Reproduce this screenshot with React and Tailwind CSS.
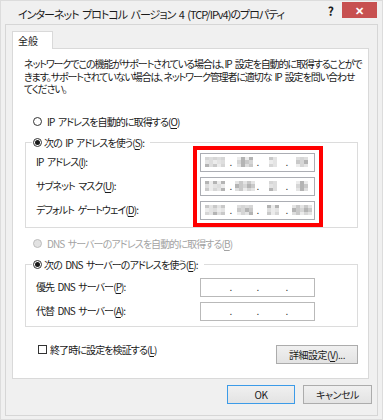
import React from "react";

const shades = [
  "bg-[#e4e4e4]",
  "bg-[#d6d6d6]",
  "bg-[#ececec]",
  "bg-[#c9c9c9]",
  "bg-[#dedede]",
  "bg-[#b4b4b4]",
];

// blurred-out address blocks: [columns, seed]
const masked = [
  [[5, 1], [4, 2], [2, 3], [3, 4]],
  [[5, 5], [5, 6], [2, 7], [3, 8]],
  [[5, 9], [4, 10], [3, 11], [5, 12]],
];

function Mosaic({ cols, seed }) {
  const rows = [0, 1, 2];
  return (
    <div className="flex flex-col">
      {rows.map((r) => (
        <div key={r} className="flex">
          {Array.from({ length: cols }).map((_, c) => (
            <span
              key={c}
              className={"block w-[4px] h-[3.5px] " + shades[(seed * 7 + r * 5 + c * 3 + r * c) % shades.length]}
            />
          ))}
        </div>
      ))}
    </div>
  );
}

function Dot() {
  return <span className="w-[4px] flex justify-center text-[#333] text-[10px] leading-none">.</span>;
}

function IpField({ blocks, border = "border-[#abadb3]" }) {
  const widths = ["w-[28px]", "w-[23px]", "w-[25px]", "w-[25px]"];
  return (
    <div className={"w-[115px] h-[19px] border bg-white flex items-center " + border}>
      {widths.map((w, i) => (
        <React.Fragment key={i}>
          <span className={"h-full flex items-center justify-center " + w}>
            {blocks && <Mosaic cols={blocks[i][0]} seed={blocks[i][1]} />}
          </span>
          {i < 3 && <Dot />}
        </React.Fragment>
      ))}
    </div>
  );
}

function K({ c }) {
  return <span className="underline underline-offset-[2px]">{c}</span>;
}

function Radio({ checked, disabled }) {
  return (
    <span
      className={
        "w-[9px] h-[9px] rounded-full border flex items-center justify-center shrink-0 " +
        (disabled ? "border-[#bdbdbd] bg-[#e2e2e2]" : "border-[#333] bg-white")
      }
    >
      {checked && <span className="w-[5px] h-[5px] rounded-full bg-[#1a1a1a]" />}
    </span>
  );
}

function Btn({ children, primary, className = "" }) {
  return (
    <button
      className={
        "h-[19px] flex items-center justify-center bg-gradient-to-b from-[#f0f0f0] to-[#e3e3e3] border text-[10px] tracking-[-0.5px] " +
        (primary ? "border-[#3c9be8] " : "border-[#acacac] ") +
        className
      }
    >
      {children}
    </button>
  );
}

export default function App() {
  const txt = "text-[10px] tracking-[-0.9px] leading-[14px] whitespace-nowrap";
  return (
    <div className="w-[383px] h-[420px] bg-[#f0f0f0] border border-[#dcdcdc] flex flex-col text-[#1a1a1a] font-['Noto_Sans_CJK_JP',sans-serif] [font-feature-settings:'palt'] [word-spacing:2px] overflow-hidden">
      {/* title bar */}
      <div className="h-[23px] flex items-start shrink-0">
        <div className="pl-[17px] pt-[5px] text-[11px] leading-[16px] tracking-[-1px] whitespace-nowrap">
          インターネット プロトコル バージョン 4 (TCP/IPv4)のプロパティ
        </div>
        <div className="ml-auto pt-[3px] pr-[8px] text-[12px] font-bold leading-[14px]">?</div>
        <div className="w-[35px] h-[16px] mt-[1px] mr-[5px] bg-[#c75050] flex items-center justify-center text-white text-[11px] font-bold leading-none">
          ✕
        </div>
      </div>

      {/* client area */}
      <div className="mx-[4px] h-[392px] border border-[#d6d6d6] flex flex-col">
        <div className="ml-[6px] mt-[6px] w-[41px] h-[18px] -mb-px relative z-10 bg-white border border-b-0 border-[#d9d9d9] pl-[5px] text-[10px] leading-[17px]">
          全般
        </div>
        <div className="ml-[6px] w-[357px] h-[331px] bg-white border border-[#d9d9d9] flex flex-col pt-[9px]">
          <p className="pl-[11px] text-[10px] tracking-[-1.1px] leading-[12.5px] whitespace-nowrap">
            ネットワークでこの機能がサポートされている場合は、IP 設定を自動的に取得することがで
            <br />
            きます。サポートされていない場合は、ネットワーク管理者に適切な IP 設定を問い合わせ
            <br />
            てください。
          </p>

          <div className={"mt-[19px] pl-[20px] h-[14px] flex items-center gap-[5px] " + txt}>
            <Radio />
            <span>
              IP アドレスを自動的に取得する(<K c="O" />)
            </span>
          </div>

          <fieldset className="mt-[7px] ml-[12px] w-[333px] border border-[#dcdcdc]">
            <legend className={"ml-[6px] pl-[1px] pr-[6px] h-[14px] flex items-center gap-[2px] " + txt}>
              <Radio checked />
              <span>
                次の IP アドレスを使う(<K c="S" />):
              </span>
            </legend>
            <div className="flex -mt-[4px]">
              <div className={"w-[167px] pl-[10px] pt-[7px] flex flex-col gap-[5px] " + txt}>
                <span className="h-[19px] flex items-center">
                  IP アドレス(<K c="I" />):
                </span>
                <span className="h-[19px] flex items-center">
                  サブネット マスク(<K c="U" />):
                </span>
                <span className="h-[19px] flex items-center">
                  デフォルト ゲートウェイ(<K c="D" />):
                </span>
              </div>
              <div className="w-[130px] border-[4px] border-[#ff0000] pl-[3px] pt-[3px] pb-[3px] flex flex-col gap-[5px]">
                {masked.map((b, i) => (
                  <IpField key={i} blocks={b} />
                ))}
              </div>
            </div>
          </fieldset>

          <div className={"mt-[9px] pl-[20px] h-[14px] flex items-center gap-[5px] text-[#a3a3a3] " + txt}>
            <Radio disabled />
            <span>
              DNS サーバーのアドレスを自動的に取得する(<K c="B" />)
            </span>
          </div>

          <fieldset className="mt-[7px] ml-[12px] w-[333px] border border-[#dcdcdc] pb-[5px]">
            <legend className={"ml-[6px] pl-[1px] pr-[6px] h-[14px] flex items-center gap-[2px] " + txt}>
              <Radio checked />
              <span>
                次の DNS サーバーのアドレスを使う(<K c="E" />):
              </span>
            </legend>
            <div className="pt-[6px] flex flex-col gap-[5px]">
              <div className="flex items-center">
                <span className={"w-[174px] pl-[10px] " + txt}>
                  優先 DNS サーバー(<K c="P" />):
                </span>
                <IpField border="border-[#b9b9b9]" />
              </div>
              <div className="flex items-center">
                <span className={"w-[174px] pl-[10px] " + txt}>
                  代替 DNS サーバー(<K c="A" />):
                </span>
                <IpField border="border-[#b9b9b9]" />
              </div>
            </div>
          </fieldset>

          <div className="mt-[16px] pl-[25px] pr-[10px] flex items-start">
            <label className={"h-[14px] flex items-center gap-[3px] " + txt}>
              <span className="w-[9px] h-[9px] border border-[#333] bg-white" />
              <span>
                終了時に設定を検証する(<K c="L" />)
              </span>
            </label>
            <Btn className="ml-auto mt-[2px] w-[82px] h-[18px]">
              詳細設定(<K c="V" />)...
            </Btn>
          </div>
        </div>

        <div className="mt-[6px] pr-[5px] flex justify-end gap-[8px]">
          <Btn primary className="w-[68px]">
            OK
          </Btn>
          <Btn className="w-[69px]">キャンセル</Btn>
        </div>
      </div>
    </div>
  );
}
